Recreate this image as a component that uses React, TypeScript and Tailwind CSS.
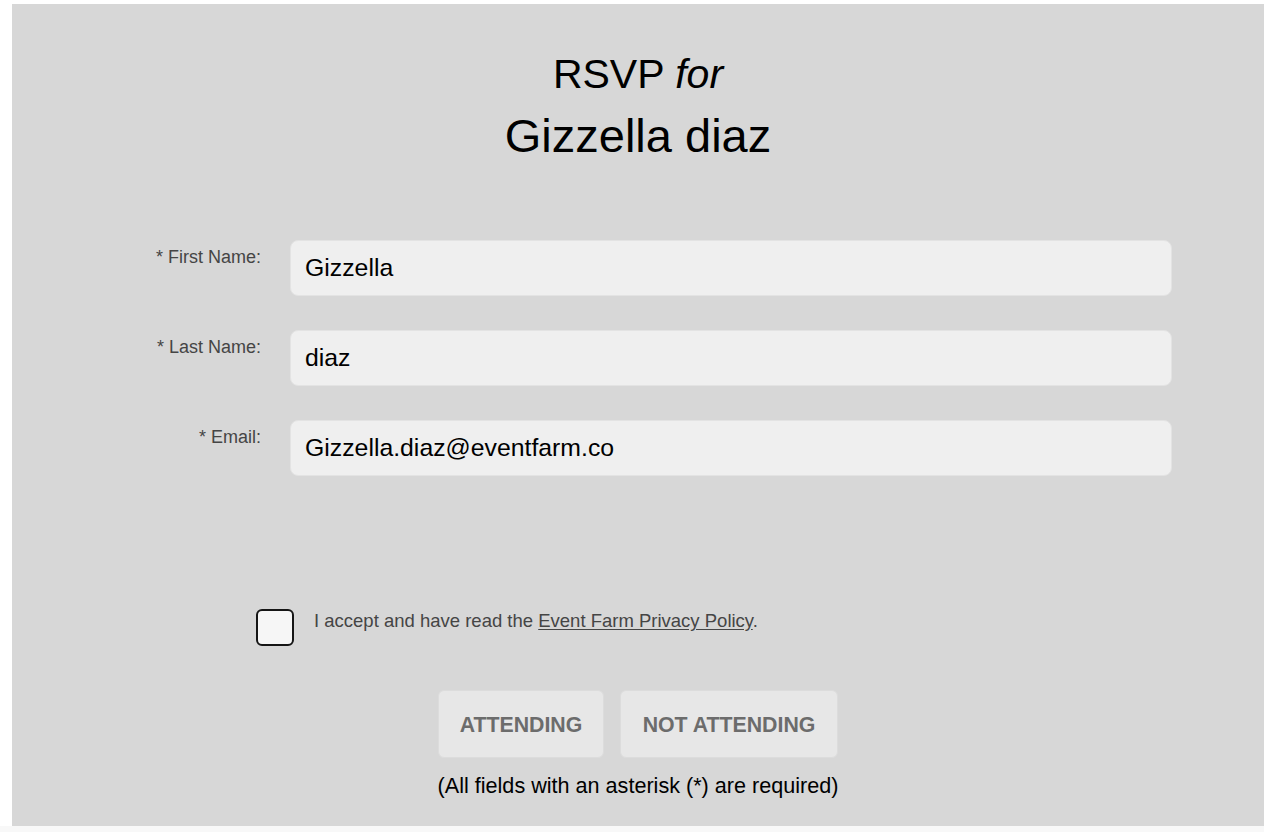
import React from "react"

const fields = [
  { label: "* First Name:", value: "Gizzella" },
  { label: "* Last Name:", value: "diaz" },
  { label: "* Email:", value: "Gizzella.diaz@eventfarm.co" },
]

export default function App() {
  return (
    <div className="min-h-[832px] w-[1276px] bg-white pt-[4px] pl-[12px] font-['Liberation_Sans',Arial,sans-serif]">
      <div className="flex h-[822px] w-[1252px] flex-col bg-[#d7d7d7] pt-[46px]">
        {/* heading */}
        <h1 className="text-center text-[41px] leading-[48px] font-normal text-black">
          RSVP <em>for</em>
        </h1>
        <h2 className="mt-[10px] text-center text-[47px] leading-[56px] font-normal text-black">
          Gizzella diaz
        </h2>

        {/* form rows */}
        <div className="mt-[76px] flex flex-col gap-[34px]">
          {fields.map((f) => (
            <div key={f.label} className="flex items-start">
              <label className="w-[249px] pt-[5px] text-right text-[18px] leading-[24px] text-[#454545]">
                {f.label}
              </label>
              <input
                type="text"
                defaultValue={f.value}
                className="ml-[29px] h-[56px] w-[882px] rounded-[8px] border border-[#e3e3e3] bg-[#efefef] px-[14px] text-[24.8px] text-black outline-none"
              />
            </div>
          ))}
        </div>

        {/* privacy checkbox */}
        <div className="mt-[133px] ml-[244px] flex items-start gap-[20px]">
          <div className="h-[37px] w-[38px] rounded-[6px] border-2 border-[#151515] bg-[#f6f6f6]" />
          <p className="text-[18.5px] leading-[24px] text-[#454545]">
            I accept and have read the{" "}
            <a className="underline underline-offset-2">Event Farm Privacy Policy</a>.
          </p>
        </div>

        {/* actions */}
        <div className="mt-[44px] flex justify-center gap-[16px]">
          <button className="h-[68px] w-[166px] rounded-[6px] border border-[#dcdcdc] bg-[#e7e7e7] pt-[3px] text-[21.3px] font-bold text-[#6c6c6c]">
            ATTENDING
          </button>
          <button className="h-[68px] w-[218px] rounded-[6px] border border-[#dcdcdc] bg-[#e7e7e7] pt-[3px] text-[21.3px] font-bold text-[#6c6c6c]">
            NOT ATTENDING
          </button>
        </div>

        <p className="mt-[14px] text-center text-[21.6px] leading-[28px] text-black">
          (All fields with an asterisk (*) are required)
        </p>
      </div>
      <div className="h-[6px] w-[1264px] -ml-[12px] bg-[#f8f8f8]" />
    </div>
  )
}
